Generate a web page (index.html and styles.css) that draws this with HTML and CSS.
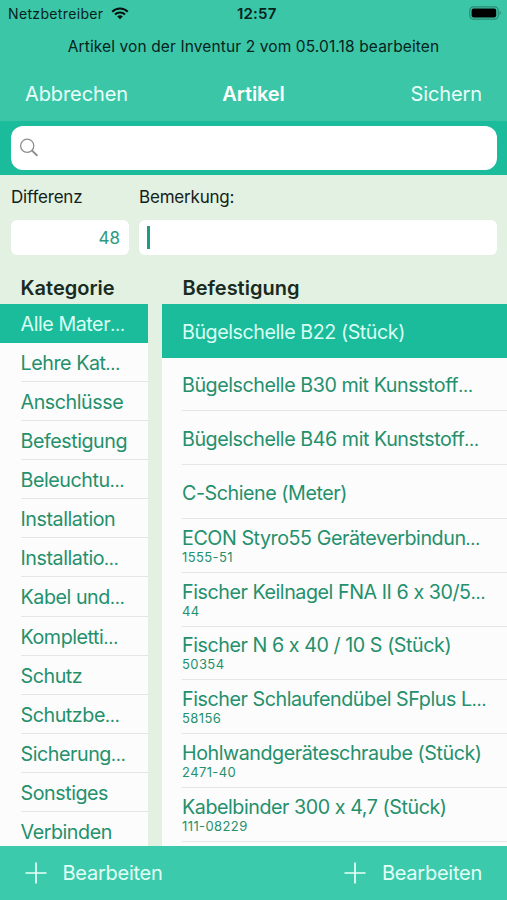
FILE: index.html
```html
<!DOCTYPE html>
<html lang="de">
<head>
<meta charset="utf-8">
<title>Artikel</title>
<link rel="stylesheet" href="styles.css">
</head>
<body>
<div class="screen">
  <header class="header">
    <div class="status">
      <span class="carrier">Netzbetreiber</span>
      <svg class="wifi" width="18" height="13" viewBox="0 0 18 13"><g fill="none" stroke="#06130f" stroke-width="2.1"><path d="M1.2 4.7a11 11 0 0 1 15.6 0"/><path d="M4 7.6a7.1 7.1 0 0 1 10 0"/></g><path d="M9 12.3 6.2 9.6a4 4 0 0 1 5.6 0z" fill="#06130f"/></svg>
      <span class="clock">12:57</span>
      <svg class="battery" width="33" height="14" viewBox="0 0 33 14"><rect x=".8" y=".8" width="28.4" height="12.4" rx="3.6" fill="none" stroke="#2a8a73" stroke-width="1.2"/><rect x="2.6" y="2.6" width="24.6" height="8.8" rx="1.8" fill="#000"/><path d="M30.6 4.8c1.6.7 1.6 3.7 0 4.4z" fill="#2a8a73"/></svg>
    </div>
    <p class="subtitle">Artikel von der Inventur 2 vom 05.01.18 bearbeiten</p>
    <nav class="nav">
      <span class="nav-left">Abbrechen</span>
      <span class="nav-title">Artikel</span>
      <span class="nav-right">Sichern</span>
    </nav>
  </header>
  <div class="search">
    <div class="search-box">
      <svg width="20" height="20" viewBox="0 0 20 20" fill="none" stroke="#8e8e90"><circle cx="8.2" cy="7.8" r="6.6" stroke-width="1.3"/><path d="m12.8 12.4 5.6 5.4" stroke-width="2"/></svg>
    </div>
  </div>
  <div class="form">
    <div class="field field-diff">
      <span class="label">Differenz</span>
      <div class="input input-diff">48</div>
    </div>
    <div class="field field-note">
      <span class="label">Bemerkung:</span>
      <div class="input"><span class="caret"></span></div>
    </div>
  </div>
  <main class="lists">
    <section class="column categories">
      <h2>Kategorie</h2>
      <ul>
        <li class="selected"><span>Alle Mater<i>…</i></span></li>
        <li><span>Lehre Kat<i>…</i></span></li>
        <li><span>Anschlüsse</span></li>
        <li><span>Befestigung</span></li>
        <li><span>Beleuchtu<i>…</i></span></li>
        <li><span>Installation</span></li>
        <li><span>Installatio<i>…</i></span></li>
        <li><span>Kabel und<i>…</i></span></li>
        <li><span>Kompletti<i>…</i></span></li>
        <li><span>Schutz</span></li>
        <li><span>Schutzbe<i>…</i></span></li>
        <li><span>Sicherung<i>…</i></span></li>
        <li><span>Sonstiges</span></li>
        <li><span>Verbinden</span></li>
      </ul>
    </section>
    <section class="column articles">
      <h2>Befestigung</h2>
      <ul>
        <li class="selected"><div><span>Bügelschelle B22 (Stück)</span></div></li>
        <li><div><span>Bügelschelle B30 mit Kunsstoff<i>…</i></span></div></li>
        <li><div><span>Bügelschelle B46 mit Kunststoff<i>…</i></span></div></li>
        <li><div><span>C-Schiene (Meter)</span></div></li>
        <li class="detailed"><div><span>ECON Styro55 Geräteverbindun<i>…</i></span><small>1555-51</small></div></li>
        <li class="detailed"><div><span>Fischer Keilnagel FNA II 6 x 30/5<i>…</i></span><small>44</small></div></li>
        <li class="detailed"><div><span>Fischer N 6 x 40 / 10 S (Stück)</span><small>50354</small></div></li>
        <li class="detailed"><div><span>Fischer Schlaufendübel SFplus L<i>…</i></span><small>58156</small></div></li>
        <li class="detailed"><div><span>Hohlwandgeräteschraube (Stück)</span><small>2471-40</small></div></li>
        <li class="detailed"><div><span>Kabelbinder 300 x 4,7 (Stück)</span><small>111-08229</small></div></li>
        <li></li>
      </ul>
    </section>
  </main>
  <footer class="toolbar">
    <div class="action"><svg width="22" height="22" viewBox="0 0 22 22" stroke="#e9fff8" stroke-width="1.7"><path d="M.5 11h21M11 .5v21"/></svg><span>Bearbeiten</span></div>
    <div class="action"><svg width="22" height="22" viewBox="0 0 22 22" stroke="#e9fff8" stroke-width="1.7"><path d="M.5 11h21M11 .5v21"/></svg><span>Bearbeiten</span></div>
  </footer>
</div>
</body>
</html>
```
FILE: styles.css
```css
* { box-sizing: border-box; }
body { margin: 0; font-family: Inter, "Liberation Sans", sans-serif; font-feature-settings: "calt" 0; background: #e2f1e1; }
h2, p, ul { margin: 0; padding: 0; }
ul { list-style: none; }
svg { display: block; flex: none; }
.screen { width: 507px; height: 900px; display: flex; flex-direction: column; overflow: hidden; white-space: nowrap; }

.header { height: 121px; flex: none; background: #3cc6a8; color: #06231c; }
.status { height: 26px; display: grid; grid-template-columns: 102px 126px 1fr 33px; align-items: center; padding: 0 5px 0 9px; font-size: 14px; }
.carrier { letter-spacing: 0.35px; margin-left: -1px; }
.clock { font-weight: 600; font-size: 15px; letter-spacing: 0.2px; color: #06231c; }
.subtitle { height: 41px; line-height: 42px; text-align: center; font-size: 15.5px; letter-spacing: 0.12px; }
.nav { height: 54px; display: grid; grid-template-columns: 1fr auto 1fr; align-items: center; padding: 0 25px; font-size: 20px; letter-spacing: -0.1px; color: #eafff9; }
.nav-title { font-weight: 600; color: #fff; }
.nav-right { text-align: right; }

.search { height: 53.5px; flex: none; background: #1bbc9b; padding: 4.5px 10px 5px 11px; }
.search-box { height: 44px; border-radius: 12px; background: #fff; display: flex; align-items: center; padding-left: 8px; }

.form { height: 96px; flex: none; display: flex; gap: 10px; padding: 10.5px 10px 0 11px; }
.field-diff { width: 118px; }
.field-note { flex: 1; }
.label { display: block; height: 35px; line-height: 25px; font-size: 17px; letter-spacing: -0.2px; color: #14211b; }
.input { height: 35px; border-radius: 6px; background: #fff; display: flex; align-items: center; padding: 0 9px; font-size: 17px; color: #2d9a80; }
.input-diff { justify-content: flex-end; }
.caret { width: 3px; height: 23px; background: #219b80; margin-left: -1px; }

.lists { height: 575.5px; flex: none; display: flex; gap: 14px; overflow: hidden; }
.column h2 { height: 33.3px; line-height: 34px; font-size: 20px; font-weight: 600; color: #182a21; padding-left: 20.5px; }
.column ul { background: #fcfcfc; color: #24906c; font-size: 19.7px; letter-spacing: -0.45px; }
.column i { font-style: normal; font-size: 17px; }
.categories { width: 148px; flex: none; }
.articles { flex: 1; min-width: 0; }
.categories li { height: 39.1px; padding-left: 20.5px; }
.categories li span { display: flex; align-items: baseline; height: 100%; line-height: 40px; border-bottom: 1px solid #e4e6e5; }
.categories li i { line-height: 1; }
.articles li { height: 53.8px; padding-left: 20px; }
.articles li div { display: flex; flex-direction: column; justify-content: center; height: 100%; padding-top: 3px; border-bottom: 1px solid #e4e6e5; }
.articles .detailed div { padding-top: 0; }
.articles li span { line-height: 24px; }
.articles li i { line-height: 1; }
.articles small { font-size: 13px; line-height: 15px; letter-spacing: 0.4px; }
.column .selected { background: #1bbc9b; color: #d9fff3; }
.column .selected > * { border-color: transparent; }

.toolbar { height: 54px; flex: none; background: #3ccaac; display: flex; justify-content: space-between; align-items: center; padding: 0 25px; color: #e2fff6; font-size: 20px; letter-spacing: -0.25px; }
.action { display: flex; align-items: center; gap: 15.5px; }
```
